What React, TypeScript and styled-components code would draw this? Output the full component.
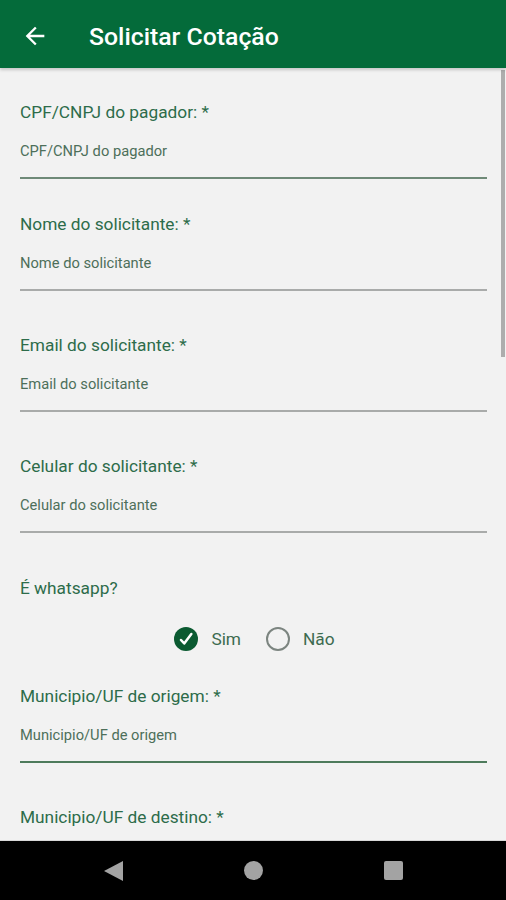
import React from "react";
import styled, { createGlobalStyle } from "styled-components";

const GlobalStyle = createGlobalStyle`
  html, body {
    margin: 0;
    padding: 0;
    background: #f2f2f2;
  }
  * {
    box-sizing: border-box;
  }
  body {
    font-family: Roboto, "Noto Sans", "Liberation Sans", sans-serif;
  }
`;

type LineKind = "focus" | "idle" | "active";

interface FieldData {
  label: string;
  placeholder: string;
  line: LineKind;
  space: number;
}

const topFields: FieldData[] = [
  { label: "CPF/CNPJ do pagador: *", placeholder: "CPF/CNPJ do pagador", line: "active", space: 34 },
  { label: "Nome do solicitante: *", placeholder: "Nome do solicitante", line: "idle", space: 35 },
  { label: "Email do solicitante: *", placeholder: "Email do solicitante", line: "idle", space: 44 },
  { label: "Celular do solicitante: *", placeholder: "Celular do solicitante", line: "idle", space: 44 },
];

const lineColors: Record<LineKind, string> = {
  focus: "#4e7b5c",
  active: "#6f8a78",
  idle: "#a9abaa",
};

const App = () => {
  return (
    <Screen>
      <GlobalStyle />
      <Header>
        <BackButton aria-label="Voltar">
          <svg width="28" height="28" viewBox="0 0 24 24" fill="#ffffff">
            <path d="M20 11H7.83l5.59-5.59L12 4l-8 8 8 8 1.41-1.41L7.83 13H20v-2z" />
          </svg>
        </BackButton>
        <Title>Solicitar Cotação</Title>
      </Header>

      <Content>
        <Form>
          {topFields.map((f) => (
            <Field key={f.label} $space={f.space}>
              <Label>{f.label}</Label>
              <Input placeholder={f.placeholder} $line={f.line} />
            </Field>
          ))}

          <Question>É whatsapp?</Question>
          <RadioRow>
            <RadioOption>
              <CheckedRadio>
                <svg width="16" height="16" viewBox="0 0 24 24">
                  <path
                    d="M4.5 13.5l4.8 5.2L20 4.5"
                    fill="none"
                    stroke="#ffffff"
                    strokeWidth="3.8"
                    strokeLinecap="round"
                    strokeLinejoin="round"
                  />
                </svg>
              </CheckedRadio>
              Sim
            </RadioOption>
            <RadioOption>
              <EmptyRadio />
              Não
            </RadioOption>
          </RadioRow>

          <Field $space={35}>
            <Label>Municipio/UF de origem: *</Label>
            <Input placeholder="Municipio/UF de origem" $line="focus" />
          </Field>

          <Field $space={44}>
            <Label>Municipio/UF de destino: *</Label>
          </Field>
        </Form>
        <ScrollThumb />
      </Content>

      <NavBar>
        <NavBack />
        <NavHome />
        <NavRecent />
      </NavBar>
    </Screen>
  );
};

export default App;

const Screen = styled.div`
  width: 506px;
  height: 900px;
  display: flex;
  flex-direction: column;
  overflow: hidden;
`;

const Header = styled.header`
  height: 68px;
  flex-shrink: 0;
  background: #046b3a;
  display: flex;
  align-items: center;
  padding: 4px 0 0 21px;
  box-shadow: 0 2px 3px rgba(0, 0, 0, 0.18);
  position: relative;
  z-index: 1;
`;

const BackButton = styled.button`
  background: none;
  border: 0;
  padding: 0;
  width: 28px;
  height: 28px;
  display: flex;
  margin-right: 40px;
`;

const Title = styled.h1`
  margin: 0;
  color: #ffffff;
  font-size: 24.8px;
  font-weight: 500;
`;

const Content = styled.main`
  flex: 1;
  background: #f2f2f2;
  position: relative;
  overflow: hidden;
  border-bottom: 1px solid #d8d8d8;
`;

const Form = styled.div`
  display: flex;
  flex-direction: column;
  padding: 0 19px 0 20px;
`;

const Field = styled.div<{ $space: number }>`
  display: flex;
  flex-direction: column;
  margin-top: ${(p) => p.$space}px;
`;

const Label = styled.label`
  font-size: 17.3px;
  line-height: 20px;
  color: #2d6c4a;
  margin-bottom: 20px;
`;

const Input = styled.input<{ $line: LineKind }>`
  border: 0;
  background: transparent;
  outline: none;
  padding: 0 0 17px;
  height: 37px;
  font-family: inherit;
  font-size: 14.7px;
  line-height: 18px;
  color: #3e6450;
  border-bottom: 2px solid ${(p) => lineColors[p.$line]};
  &::placeholder {
    color: #4d6f5a;
    opacity: 1;
  }
`;

const Question = styled.div`
  margin-top: 45px;
  font-size: 17.3px;
  line-height: 20px;
  color: #2d6c4a;
`;

const RadioRow = styled.div`
  margin-top: 29px;
  height: 24px;
  display: flex;
  justify-content: center;
  gap: 25px;
  padding-left: 2px;
`;

const RadioOption = styled.div`
  display: flex;
  align-items: center;
  gap: 13px;
  font-size: 17.3px;
  color: #3d6b50;
`;

const CheckedRadio = styled.span`
  width: 24px;
  height: 24px;
  border-radius: 50%;
  background: #0b5a31;
  display: flex;
  align-items: center;
  justify-content: center;
`;

const EmptyRadio = styled.span`
  width: 24px;
  height: 24px;
  border-radius: 50%;
  border: 2px solid #7c8580;
`;

const ScrollThumb = styled.div`
  position: absolute;
  right: 1px;
  top: 2px;
  width: 4px;
  height: 287px;
  background: #adadad;
`;

const NavBar = styled.nav`
  height: 59px;
  flex-shrink: 0;
  background: #000000;
  display: flex;
  align-items: center;
  justify-content: center;
  gap: 121px;
`;

const NavBack = styled.span`
  width: 0;
  height: 0;
  border-top: 10.5px solid transparent;
  border-bottom: 10.5px solid transparent;
  border-right: 19px solid #a3a3a3;
`;

const NavHome = styled.span`
  width: 19px;
  height: 19px;
  border-radius: 50%;
  background: #a3a3a3;
`;

const NavRecent = styled.span`
  width: 19px;
  height: 19px;
  border-radius: 2px;
  background: #a3a3a3;
`;
